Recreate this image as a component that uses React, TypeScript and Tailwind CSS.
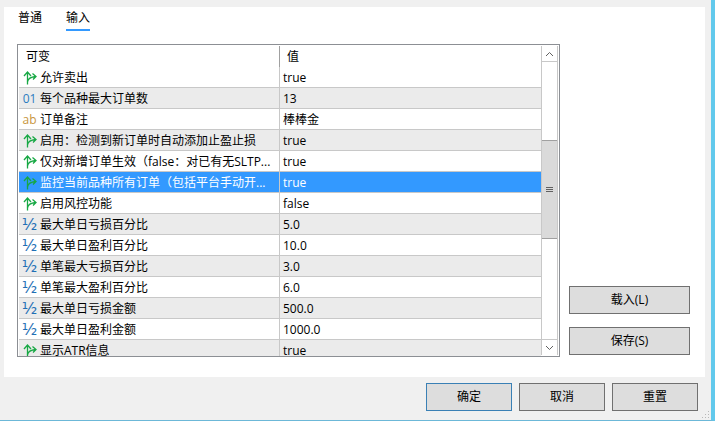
const rows = [
  { icon: 'bool', name: '允许卖出', value: 'true' },
  { icon: 'int', name: '每个品种最大订单数', value: '13' },
  { icon: 'str', name: '订单备注', value: '棒棒金' },
  { icon: 'bool', name: '启用：检测到新订单时自动添加止盈止损', value: 'true' },
  { icon: 'bool', name: '仅对新增订单生效（false：对已有无SLTP...', value: 'true' },
  { icon: 'bool', name: '监控当前品种所有订单（包括平台手动开...', value: 'true' },
  { icon: 'bool', name: '启用风控功能', value: 'false' },
  { icon: 'num', name: '最大单日亏损百分比', value: '5.0' },
  { icon: 'num', name: '最大单日盈利百分比', value: '10.0' },
  { icon: 'num', name: '单笔最大亏损百分比', value: '3.0' },
  { icon: 'num', name: '单笔最大盈利百分比', value: '6.0' },
  { icon: 'num', name: '最大单日亏损金额', value: '500.0' },
  { icon: 'num', name: '最大单日盈利金额', value: '1000.0' },
  { icon: 'bool', name: '显示ATR信息', value: 'true' },
];

function BoolIcon() {
  return (
    <svg width="14" height="14" viewBox="0 0 14 14" fill="none" stroke="#17a844" strokeWidth="1.3">
      <path d="M4.5 13.5V1.5M1 5l3.5-4L8 5" />
      <path d="M4.5 10.5C5 8 8 6 12.5 5.5M9.5 2.5l3.5 3-3 3" />
    </svg>
  );
}

function RowIcon({ type }: { type: string }) {
  if (type === 'bool') return <BoolIcon />;
  if (type === 'int') return <span className="text-[12px] leading-none font-medium text-[#2a7cc0]">01</span>;
  if (type === 'str') return <span className="text-[12px] leading-none font-medium text-[#c8963e]">ab</span>;
  return <span className="font-['DejaVu_Sans',sans-serif] text-[16px] leading-none font-medium text-[#1f6fb5]">½</span>;
}

function Button({ label, focused, wide }: { label: string; focused?: boolean; wide?: boolean }) {
  return (
    <button
      className={
        'h-[28px] border bg-[#dddddd] text-[12px] text-black ' +
        (wide ? 'w-[121px] ' : 'w-[86px] ') +
        (focused ? 'border-[#3a80b5]' : 'border-[#707070]')
      }
    >
      {label}
    </button>
  );
}

export default function App() {
  return (
    <div className="relative flex h-[421px] w-[715px] flex-col overflow-hidden border-r-4 border-b border-r-[#62c9ec] border-b-[#6cb8d8] bg-[#f0f0f0] pt-[7px] pl-[4px] font-['Open_Sans','Noto_Sans_CJK_SC',sans-serif] text-[12px] text-black">
      {/* Tabs + table */}
      <div className="flex h-[370px] w-[701px] flex-col bg-white pl-[13px]">
        <div className="flex h-[24px] items-start gap-[24px] pt-[2px] pl-[1px]">
          <span className="leading-[18px]">普通</span>
          <span className="relative leading-[18px]">
            输入
            <span className="absolute top-[20px] left-0 h-[2px] w-full bg-[#3399ff]" />
          </span>
        </div>

        <div className="mt-[13px] flex">
          <div className="flex h-[313px] w-[543px] border border-[#8c8f94] p-[1px] pb-0">
            <div className="h-full w-[522px] overflow-hidden">
              <div className="flex h-[21px] items-center">
                <div className="h-full w-[260px] pl-[7px] leading-[21px]">可变</div>
                <div className="h-full w-px bg-[#a0a0a0]" />
                <div className="pl-[7px] leading-[21px]">值</div>
              </div>
              {rows.map((row, i) => {
                const selected = i === 5;
                return (
                  <div
                    key={row.name}
                    className={
                      'flex h-[21px] items-center border-b border-[#c8c8c8] ' +
                      (selected ? 'bg-[#3399ff] text-white' : i % 2 === 1 ? 'bg-[#ebebeb]' : 'bg-white')
                    }
                  >
                    <div className="flex h-full w-[260px] items-center pt-px">
                      <div className="flex w-[21px] shrink-0 justify-center">
                        <RowIcon type={row.icon} />
                      </div>
                      <span className="whitespace-nowrap">{row.name}</span>
                    </div>
                    <div className="h-full w-px bg-[#c8c8c8]" />
                    <div className="pt-px pl-[3px]">{row.value}</div>
                  </div>
                );
              })}
            </div>

            {/* Scrollbar */}
            <div className="flex h-[309px] w-[17px] flex-col border-x border-[#c8c8c8] bg-white">
              <div className="flex h-[16px] items-center justify-center border-b border-[#c8c8c8]">
                <svg width="9" height="6" viewBox="0 0 9 6" fill="none" stroke="#606060">
                  <path d="M1 5l3.5-3.5L8 5" />
                </svg>
              </div>
              <div className="mt-[78px] flex h-[99px] items-center justify-center border-y border-[#a0a0a0] bg-[#dadada]">
                <div className="flex w-[7px] flex-col gap-px">
                  <div className="h-px bg-[#606060]" />
                  <div className="h-px bg-[#606060]" />
                  <div className="h-px bg-[#606060]" />
                </div>
              </div>
              <div className="mt-auto flex h-[16px] items-center justify-center border-t border-[#c8c8c8]">
                <svg width="9" height="6" viewBox="0 0 9 6" fill="none" stroke="#606060">
                  <path d="M1 1l3.5 3.5L8 1" />
                </svg>
              </div>
            </div>
          </div>

          <div className="ml-[9px] flex flex-col justify-end gap-[13px] pb-[2px]">
            <Button label="载入(L)" wide />
            <Button label="保存(S)" wide />
          </div>
        </div>
      </div>

      {/* Footer buttons */}
      <div className="flex justify-end gap-[7px] pt-[6px] pr-[13px]">
        <Button label="确定" focused />
        <Button label="取消" />
        <Button label="重置" />
      </div>

      {/* Resize grip */}
      <svg className="absolute right-[1px] bottom-[1px]" width="9" height="9" viewBox="0 0 9 9" fill="#b8b8b8">
        <rect x="7" y="1" width="1" height="1" />
        <rect x="4" y="4" width="1" height="1" />
        <rect x="7" y="4" width="1" height="1" />
        <rect x="1" y="7" width="1" height="1" />
        <rect x="4" y="7" width="1" height="1" />
        <rect x="7" y="7" width="1" height="1" />
      </svg>
    </div>
  );
}
